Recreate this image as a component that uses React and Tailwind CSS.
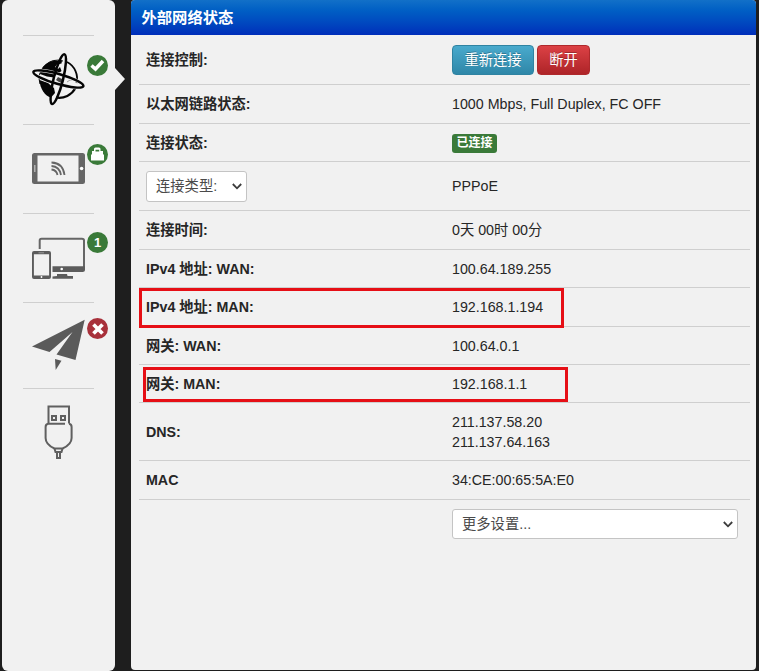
const LINE = "border-[#cfcfcf]";

function Badge({ color, children }) {
  return (
    <span className={`absolute left-[64px] w-[21px] h-[21px] rounded-full flex items-center justify-center text-white ${color}`}>
      {children}
    </span>
  );
}

function GlobeIcon() {
  return (
    <svg width="55" height="56" viewBox="31 52 55 56" fill="none" stroke="#050505">
      <path d="M40 84 A18.500 18.500 0 0 1 63 61" strokeWidth="1" />
      <path d="M67 62 A18.500 18.500 0 0 1 76.500 83" strokeWidth="1.800" />
      <path d="M75.500 88 A18.500 18.500 0 0 1 56 97.500" strokeWidth="2.200" />
      <path fill="#050505" stroke="none" d="M40 74 C41 67 47 62 53 61 L62 60.500 61.500 63.500 57 64.500 55 67 58 69 60 67 61.500 71 59 73 57 73 54 77.500 47 76.500Z" />
      <path fill="#050505" stroke="none" d="M39.500 80 L48 83 54 88 55 93 51 97.500 C45 96 40 89 39.500 80Z" />
      <path fill="#444" stroke="none" d="M56 80 L58 77 62 79 62 84 59 82Z" />
      <path stroke="#888" strokeWidth=".8" d="M67 82 L70 80 73 80" />
      <ellipse cx="58.400" cy="79" rx="26.300" ry="4.900" stroke="#f1f1f1" strokeWidth="3.600" transform="rotate(16 58.400 79)" />
      <ellipse cx="58.400" cy="79" rx="26" ry="5" strokeWidth="2.500" transform="rotate(16 58.400 79)" />
      <ellipse cx="58.300" cy="79.200" rx="25.600" ry="4.700" strokeWidth="2.500" transform="rotate(104 58.300 79.200)" />
    </svg>
  );
}

function PhoneIcon() {
  return (
    <svg width="55" height="34" viewBox="31 152 55 34" fill="none">
      <path fill="#666" fillRule="evenodd" d="M34.5 153H82.5Q85 153 85 155.500V181.500Q85 184 82.500 184H34.500Q32 184 32 181.500V155.500Q32 153 34.500 153ZM37.500 155.500V181.500H78.500V155.500Z" />
      <path stroke="#bbb" strokeWidth="1.300" d="M34.800 165V172" />
      <circle cx="81.600" cy="168.500" r="1.800" fill="#fff" />
      <g stroke="#666" strokeWidth="1.800">
        <path d="M51.500 162.500Q63 163 64.500 175" />
        <path d="M51.500 166Q59.500 166.500 61 175" />
        <path d="M51.500 169.500Q56.500 170 57.500 175" />
      </g>
    </svg>
  );
}

function DevicesIcon() {
  return (
    <svg width="55" height="44" viewBox="31 237 55 44" fill="none">
      <path stroke="#666" strokeWidth="2" d="M39.700 249V240.500Q39.700 238.700 41.500 238.700H82Q84 238.700 84 240.500V268" />
      <path fill="#5c5c5c" d="M52.500 266.300H85V269.500Q85 272 82.500 272H52.500Z" />
      <circle cx="61.700" cy="269" r="1.300" fill="#fff" />
      <path fill="#5c5c5c" d="M57 274H67L67.500 276H73V278.700H52.500V276.500L57 276Z" />
      <path fill="#5c5c5c" fillRule="evenodd" d="M34 251H49Q51 251 51 253V277Q51 279 49 279H34Q32 279 32 277V253Q32 251 34 251ZM33.900 254.300V275.500H49.100V254.300Z" />
      <path stroke="#aaa" strokeWidth=".8" d="M38.500 252.800H44" />
      <circle cx="41.500" cy="277" r=".9" fill="#fff" />
    </svg>
  );
}

function PlaneIcon() {
  return (
    <svg width="55" height="51" viewBox="31 319 55 51" fill="#5a5a5a">
      <path d="M84.700 319.700L32 346.500 49.500 352 72.500 332 56.500 354.500 75.500 360Z" />
      <path d="M55 359L61.500 360.800 55.700 370Z" />
    </svg>
  );
}

function UsbIcon() {
  return (
    <svg width="30" height="55" viewBox="44 405 30 55" fill="none" stroke="#606060" strokeWidth="2">
      <path d="M48.500 423.500V406.500H69V423.500" />
      <path d="M52 416H56V420H52ZM61 416H65V420H61Z" />
      <path d="M65 423.700H48.300Q45.600 424 45.600 427V438C45.600 443 50 446.500 54.500 448.500H62.500C67 446.500 71.600 443 71.600 438V427Q71.600 424 69 423.700" />
      <path d="M54.500 448.500L55.500 452H61.500L62.500 448.500" />
      <path d="M57 452V458H60V452" />
    </svg>
  );
}

function NavItem({ className, badge, children }) {
  return (
    <div className={`relative flex items-start ml-[21px] w-[71px] border-t ${LINE} ${className}`}>
      {children}
      {badge}
    </div>
  );
}

function Sidebar() {
  return (
    <nav className="relative w-[113px] shrink-0 h-[671px] rounded-md bg-[#f1f1f1] pt-[35px]">
      <NavItem
        className="h-[89px] pt-4 pl-2"
        badge={
          <Badge color="top-[18.5px] bg-[#3a7a39]">
            <svg width="15" height="13" viewBox="0 0 15 13" fill="none" stroke="#fff" strokeWidth="3.500">
              <path d="M1.500 6.500L5.500 10 13 2" />
            </svg>
          </Badge>
        }
      >
        <GlobeIcon />
      </NavItem>
      <NavItem
        className="h-[89px] pt-[27px] pl-2"
        badge={
          <Badge color="top-[18.5px] bg-[#3a7a39]">
            <svg width="15" height="15" viewBox="0 0 15 15" fill="#fff">
              <path fillRule="evenodd" d="M4 4V2Q4 .5 5.500 .5H9Q10.500 .5 10.500 2V4H13V7L14 8V13.500H1V8L2 7V4ZM5.500 4.500H9.200V2.700H5.500Z" />
            </svg>
          </Badge>
        }
      >
        <PhoneIcon />
      </NavItem>
      <NavItem
        className="h-[89px] pt-[23px] pl-2"
        badge={
          <Badge color="top-[18px] bg-[#3a7a39]">
            <span className="text-[13px] leading-none font-bold">1</span>
          </Badge>
        }
      >
        <DevicesIcon />
      </NavItem>
      <NavItem
        className="h-[86px] pt-4 pl-2"
        badge={
          <Badge color="top-[15px] bg-[#a8313b]">
            <svg width="12" height="12" viewBox="0 0 12 12" stroke="#fff" strokeWidth="3.700">
              <path d="M1.500 1.500L10.500 10.500M10.500 1.500L1.500 10.500" />
            </svg>
          </Badge>
        }
      >
        <PlaneIcon />
      </NavItem>
      <NavItem className="h-[100px] pt-4 pl-[21px]">
        <UsbIcon />
      </NavItem>
      <svg className="absolute left-[113px] top-[68px]" width="10" height="22" viewBox="0 0 10 22">
        <path fill="#f1f1f1" d="M0 0L10 11 0 22Z" />
      </svg>
    </nav>
  );
}

function Select({ children, className }) {
  return (
    <button className={`flex items-center justify-between rounded-[3px] border border-[#c4c4c4] bg-white pl-[9px] text-[14.3px] text-[#4a4a4a] ${className}`}>
      <span>{children}</span>
      <svg width="10" height="7" viewBox="0 0 10 7" fill="none" stroke="#3c3c3c" strokeWidth="1.800">
        <path d="M.8 1L5 5.300 9.200 1" />
      </svg>
    </button>
  );
}

function Row({ label, height, highlight, children }) {
  return (
    <div className={`relative flex items-center border-b pl-[7px] ${LINE} ${height}`}>
      <div className="w-[306px] shrink-0 font-bold">{label}</div>
      <div>{children}</div>
      {highlight && <span className={`absolute z-10 w-[425px] border-3 border-[#e60f16] ${highlight}`} />}
    </div>
  );
}

export default function App() {
  return (
    <div className="flex h-[671px] w-[759px] overflow-hidden bg-[#1e1e1e] pl-[2px] text-[14.25px] leading-5 text-[#262626] [font-family:'Liberation_Sans','Noto_Sans_CJK_SC',sans-serif]">
      <Sidebar />
      <main className="ml-4 h-[670px] w-[625px] shrink-0 overflow-hidden rounded-[4px] bg-[#f1f1f1]">
        <h1 className="flex h-[35px] items-center bg-linear-to-b from-[#1270c8] to-[#002dba] pl-[10.5px] text-[15.300px] font-bold text-white">
          外部网络状态
        </h1>
        <div className="ml-2 w-[611px]">
          <Row label="连接控制:" height="h-[50px]">
            <div className="flex gap-[3px]">
              <button className="h-[30px] w-[82px] rounded-[4px] border border-[#2f83a2] bg-linear-to-b from-[#49aacd] to-[#2f87a8] text-white [text-shadow:0_-1px_0_rgba(0,0,0,.25)]">
                重新连接
              </button>
              <button className="h-[30px] w-[53px] rounded-[4px] border border-[#af292c] bg-linear-to-b from-[#dc4145] to-[#ae2428] text-white [text-shadow:0_-1px_0_rgba(0,0,0,.25)]">
                断开
              </button>
            </div>
          </Row>
          <Row label="以太网链路状态:" height="h-[39px]">1000 Mbps, Full Duplex, FC OFF</Row>
          <Row label="连接状态:" height="h-[38px]">
            <span className="mt-px flex h-[19px] w-[45px] items-center justify-center rounded-[3px] bg-[#3a7a39] text-[12px] font-bold text-white">
              已连接
            </span>
          </Row>
          <Row
            label={<Select className="h-[31px] w-[101px] pr-[4px] font-normal">连接类型:</Select>}
            height="h-[49px]"
          >
            PPPoE
          </Row>
          <Row label="连接时间:" height="h-[39px]">0天 00时 00分</Row>
          <Row label="IPv4 地址: WAN:" height="h-[38px]">100.64.189.255</Row>
          <Row label="IPv4 地址: MAN:" height="h-[39px]" highlight="left-0 top-0 h-[40px]">192.168.1.194</Row>
          <Row label="网关: WAN:" height="h-[38px]">100.64.0.1</Row>
          <Row label="网关: MAN:" height="h-[38px]" highlight="left-1 top-[2px] h-[35px]">192.168.1.1</Row>
          <Row label="DNS:" height="h-[58px]">
            211.137.58.20
            <br />
            211.137.64.163
          </Row>
          <Row label="MAC" height="h-[39px]">34:CE:00:65:5A:E0</Row>
          <div className="pt-[9px] pl-[313px]">
            <Select className="h-[30px] w-[286px] pr-[4px]">更多设置...</Select>
          </div>
        </div>
      </main>
    </div>
  );
}
